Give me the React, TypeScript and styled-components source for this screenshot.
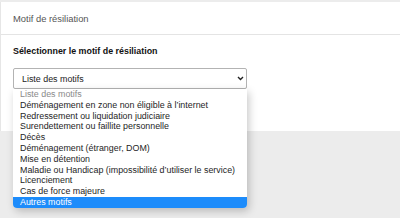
import React from 'react';
import styled, { createGlobalStyle } from 'styled-components';

const Global = createGlobalStyle`
  html, body {
    margin: 0;
    padding: 0;
    background: #ececec;
    font-family: 'Liberation Sans', Arial, sans-serif;
  }
`;

const Page = styled.div`
  padding-top: 2px;
  height: 216px;
  background: #ececec;
`;

const Card = styled.div`
  background: #fff;
  border-left: 1px solid #e6e6e6;
`;

const CardHeader = styled.div`
  height: 32px;
  display: flex;
  align-items: center;
  padding-left: 12px;
  font-size: 9.4px;
  color: #555;
  border-bottom: 1px solid #e4e4e4;
`;

const CardBody = styled.div`
  height: 96px;
  padding: 10px 0 0 12px;
  box-sizing: border-box;
`;

const Title = styled.div`
  font-size: 8.9px;
  font-weight: bold;
  color: #111;
  line-height: 12px;
`;

const SelectWrap = styled.div`
  position: relative;
  margin-top: 11px;
  width: 234px;
`;

const SelectBox = styled.div`
  height: 21px;
  box-sizing: border-box;
  border: 1px solid #b3b3b3;
  border-radius: 2px;
  display: flex;
  align-items: center;
  justify-content: space-between;
  padding: 0 2px 0 8px;
  font-size: 8.9px;
  color: #222;
`;

const List = styled.ul`
  position: absolute;
  top: 21px;
  left: 0;
  width: 234px;
  margin: 0;
  padding: 0;
  list-style: none;
  background: #fff;
  border-radius: 0 0 4px 4px;
  box-shadow: 2px 3px 8px rgba(0, 0, 0, 0.22);
  overflow: hidden;
`;

const Item = styled.li<{ $muted?: boolean; $selected?: boolean }>`
  height: 10.8px;
  line-height: 10.8px;
  padding-left: 7px;
  font-size: 8.9px;
  white-space: nowrap;
  overflow: hidden;
  color: ${p => (p.$selected ? '#fff' : p.$muted ? '#8a8a8a' : '#1e1e1e')};
  background: ${p => (p.$selected ? '#1d8cfb' : 'transparent')};
`;

const options = [
  'Déménagement en zone non éligible à l’internet',
  'Redressement ou liquidation judiciaire',
  'Surendettement ou faillite personnelle',
  'Décès',
  'Déménagement (étranger, DOM)',
  'Mise en détention',
  'Maladie ou Handicap (impossibilité d’utiliser le service)',
  'Licenciement',
  'Cas de force majeure',
  'Autres motifs',
];

const Chevron = () => (
  <svg width="7" height="5" viewBox="0 0 7 5">
    <path d="M1 1 L3.5 3.5 L6 1" fill="none" stroke="#222" strokeWidth="1.4" />
  </svg>
);

export default function App() {
  return (
    <Page>
      <Global />
      <Card>
        <CardHeader>Motif de résiliation</CardHeader>
        <CardBody>
          <Title>Sélectionner le motif de résiliation</Title>
          <SelectWrap>
            <SelectBox>
              <span>Liste des motifs</span>
              <Chevron />
            </SelectBox>
            <List>
              <Item $muted>Liste des motifs</Item>
              {options.map(o => (
                <Item key={o} $selected={o === 'Autres motifs'}>
                  {o}
                </Item>
              ))}
            </List>
          </SelectWrap>
        </CardBody>
      </Card>
    </Page>
  );
}
